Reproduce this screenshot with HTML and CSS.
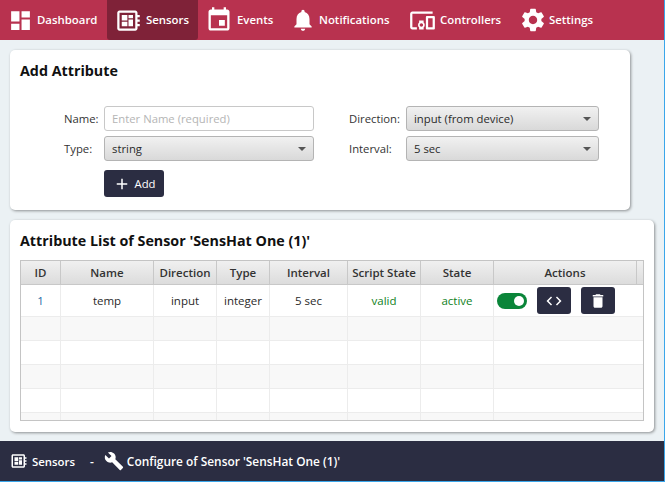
FILE: index.html
```html
<!DOCTYPE html>
<html lang="en">
<head>
<meta charset="utf-8">
<title>Configure Sensor</title>
<link rel="stylesheet" href="styles.css">
</head>
<body>
<div class="page">
  <nav class="nav">
    <a class="nav-item item-dash"><svg class="ico s25" viewBox="0 0 24 24"><path d="M3 13h8V3H3v10zm0 8h8v-6H3v6zm10 0h8V11h-8v10zm0-18v6h8V3h-8z"/></svg><span class="nav-text">Dashboard</span></a>
    <a class="nav-item item-sensors active"><svg class="ico s27" viewBox="0 0 24 24"><path d="M22 9V7h-2V5c0-1.1-.9-2-2-2H4c-1.1 0-2 .9-2 2v14c0 1.1.9 2 2 2h14c1.1 0 2-.9 2-2v-2h2v-2h-2v-2h2v-2h-2V9h2zm-4 10H4V5h14v14zM6 13h5v4H6zm6-6h4v3h-4zM6 7h5v5H6zm6 4h4v6h-4z"/></svg><span class="nav-text">Sensors</span></a>
    <a class="nav-item item-events"><svg class="ico s28" viewBox="0 0 24 24"><path d="M17 12h-5v5h5v-5zM16 1v2H8V1H6v2H5c-1.11 0-1.99.9-1.99 2L3 19c0 1.1.89 2 2 2h14c1.1 0 2-.9 2-2V5c0-1.1-.9-2-2-2h-1V1h-2zm3 18H5V8h14v11z"/></svg><span class="nav-text">Events</span></a>
    <a class="nav-item item-notif"><svg class="ico s26" viewBox="0 0 24 24"><path d="M12 22c1.1 0 2-.9 2-2h-4c0 1.1.89 2 2 2zm6-6v-5c0-3.07-1.64-5.64-4.5-6.32V4c0-.83-.67-1.5-1.5-1.5s-1.5.67-1.5 1.5v.68C7.63 5.36 6 7.92 6 11v5l-2 2v1h16v-1l-2-2z"/></svg><span class="nav-text">Notifications</span></a>
    <a class="nav-item item-ctrl"><svg class="ico s27" viewBox="0 0 24 24"><path d="M3 6h18V4H3c-1.1 0-2 .9-2 2v12c0 1.1.9 2 2 2h4v-2H3V6zm10 6H9v1.78c-.61.55-1 1.33-1 2.22s.39 1.67 1 2.22V20h4v-1.78c.61-.55 1-1.34 1-2.22s-.39-1.67-1-2.22V12zm-2 5.5c-.83 0-1.5-.67-1.5-1.5s.67-1.5 1.5-1.5 1.5.67 1.5 1.5-.67 1.5-1.5 1.5zM22 8h-6c-.5 0-1 .5-1 1v10c0 .5.5 1 1 1h6c.5 0 1-.5 1-1V9c0-.5-.5-1-1-1zm-1 10h-4v-8h4v8z"/></svg><span class="nav-text">Controllers</span></a>
    <a class="nav-item item-set"><svg class="ico s28" viewBox="0 0 24 24"><path d="M19.14 12.94c.04-.3.06-.61.06-.94 0-.32-.02-.64-.07-.94l2.03-1.58c.18-.14.23-.41.12-.61l-1.92-3.32c-.12-.22-.37-.29-.59-.22l-2.39.96c-.5-.38-1.03-.7-1.62-.94l-.36-2.54c-.04-.24-.24-.41-.48-.41h-3.84c-.24 0-.43.17-.47.41l-.36 2.54c-.59.24-1.13.57-1.62.94l-2.39-.96c-.22-.08-.47 0-.59.22L2.74 8.87c-.12.21-.08.47.12.61l2.03 1.58c-.05.3-.09.63-.09.94s.02.64.07.94l-2.03 1.58c-.18.14-.23.41-.12.61l1.92 3.32c.12.22.37.29.59.22l2.39-.96c.5.38 1.03.7 1.62.94l.36 2.54c.05.24.24.41.48.41h3.84c.24 0 .44-.17.47-.41l.36-2.54c.59-.24 1.13-.56 1.62-.94l2.39.96c.22.08.47 0 .59-.22l1.92-3.32c.12-.22.07-.47-.12-.61l-2.01-1.58zM12 15.6c-1.98 0-3.6-1.62-3.6-3.6s1.62-3.6 3.6-3.6 3.6 1.62 3.6 3.6-1.62 3.6-3.6 3.6z"/></svg><span class="nav-text">Settings</span></a>
  </nav>

  <main class="main">
    <section class="card card-form">
      <h2 class="card-title">Add Attribute</h2>
      <form class="form">
        <label class="lbl">Name:</label>
        <input class="field" type="text" placeholder="Enter Name (required)">
        <label class="lbl lbl-right">Direction:</label>
        <div class="field select"><span>input (from device)</span><i class="caret"></i></div>
        <label class="lbl">Type:</label>
        <div class="field select"><span>string</span><i class="caret"></i></div>
        <label class="lbl lbl-right">Interval:</label>
        <div class="field select"><span>5 sec</span><i class="caret"></i></div>
        <button class="btn btn-add" type="button"><svg class="ico s18" viewBox="0 0 24 24"><path d="M19 13h-6v6h-2v-6H5v-2h6V5h2v6h6v2z"/></svg><span>Add</span></button>
      </form>
    </section>

    <section class="card card-list">
      <h2 class="card-title">Attribute List of Sensor 'SensHat One (1)'</h2>
      <div class="grid-wrap">
        <table class="grid">
          <colgroup>
            <col class="c-id"><col class="c-name"><col class="c-dir"><col class="c-type"><col class="c-int"><col class="c-script"><col class="c-state"><col class="c-act"><col class="c-gut">
          </colgroup>
          <thead>
            <tr><th>ID</th><th>Name</th><th>Direction</th><th>Type</th><th>Interval</th><th>Script State</th><th>State</th><th>Actions</th><th></th></tr>
          </thead>
          <tbody>
            <tr class="row-main">
              <td class="id">1</td><td>temp</td><td>input</td><td>integer</td><td>5 sec</td><td class="ok">valid</td><td class="ok">active</td>
              <td colspan="2" class="actions">
                <div class="actions-in">
                  <span class="toggle"><i class="knob"></i></span>
                  <button class="btn btn-act" type="button"><svg class="ico s18" viewBox="0 0 24 24"><path d="M9.4 16.6L4.8 12l4.6-4.6L8 6l-6 6 6 6 1.4-1.4zm5.2 0l4.6-4.6-4.6-4.6L16 6l6 6-6 6-1.4-1.4z"/></svg></button>
                  <button class="btn btn-act" type="button"><svg class="ico s18" viewBox="0 0 24 24"><path d="M6 19c0 1.1.9 2 2 2h8c1.1 0 2-.9 2-2V7H6v12zM19 4h-3.5l-1-1h-5l-1 1H5v2h14V4z"/></svg></button>
                </div>
              </td>
            </tr>
            <tr class="alt"><td></td><td></td><td></td><td></td><td></td><td></td><td></td><td colspan="2"></td></tr>
            <tr><td></td><td></td><td></td><td></td><td></td><td></td><td></td><td colspan="2"></td></tr>
            <tr class="alt"><td></td><td></td><td></td><td></td><td></td><td></td><td></td><td colspan="2"></td></tr>
            <tr><td></td><td></td><td></td><td></td><td></td><td></td><td></td><td colspan="2"></td></tr>
            <tr class="alt"><td></td><td></td><td></td><td></td><td></td><td></td><td></td><td colspan="2"></td></tr>
          </tbody>
        </table>
      </div>
    </section>
  </main>

  <footer class="foot">
    <svg class="ico s18" viewBox="0 0 24 24"><path d="M22 9V7h-2V5c0-1.1-.9-2-2-2H4c-1.1 0-2 .9-2 2v14c0 1.1.9 2 2 2h14c1.1 0 2-.9 2-2v-2h2v-2h-2v-2h2v-2h-2V9h2zm-4 10H4V5h14v14zM6 13h5v4H6zm6-6h4v3h-4zM6 7h5v5H6zm6 4h4v6h-4z"/></svg>
    <span class="crumb crumb-first">Sensors</span>
    <span class="sep">-</span>
    <svg class="ico s20" viewBox="0 0 24 24"><path d="M22.7 19l-9.1-9.1c.9-2.3.4-5-1.5-6.9-2-2-5-2.4-7.4-1.3L9 6 6 9 1.6 4.7C.4 7.1.9 10.1 2.9 12.1c1.9 1.9 4.6 2.4 6.9 1.5l9.1 9.1c.4.4 1 .4 1.4 0l2.3-2.3c.5-.4.5-1.1.1-1.4z"/></svg>
    <span class="crumb">Configure of Sensor 'SensHat One (1)'</span>
  </footer>
</div>
</body>
</html>
```
FILE: styles.css
```css
* { box-sizing: border-box; }
html, body { margin: 0; padding: 0; }
body {
  width: 665px;
  height: 482px;
  overflow: hidden;
  font-family: "Open Sans", "Noto Sans", sans-serif;
  font-size: 11.3px;
  color: #2a2a2a;
}
.page {
  width: 665px;
  height: 482px;
  display: flex;
  flex-direction: column;
  background: #ebf1f4;
  border-right: 1px solid #3aa6ea;
  border-bottom: 1px solid #3aa6ea;
}
.ico { fill: currentColor; display: block; flex: none; }
.s18 { width: 18px; height: 18px; }
.s20 { width: 20px; height: 20px; }
.s25 { width: 25px; height: 25px; }
.s26 { width: 26px; height: 26px; }
.s27 { width: 27px; height: 27px; }
.s28 { width: 28px; height: 28px; }

.nav {
  height: 40px;
  flex: none;
  display: flex;
  align-items: stretch;
  background: #b8324f;
  color: #fff;
  font-size: 11.4px;
  font-weight: 600;
  padding-left: 8px;
}
.nav-item {
  display: flex;
  align-items: center;
  border-radius: 0 0 3px 3px;
}
.nav-text { margin-bottom: 2px; }
.item-dash { gap: 4px; width: 99px; }
.item-sensors { gap: 4px; width: 91px; padding-left: 8px; }
.item-events { gap: 4px; width: 90px; padding-left: 7px; }
.item-notif { gap: 3px; width: 112px; padding-left: 2px; }
.item-ctrl { gap: 4px; width: 112px; padding-left: 9px; }
.item-set { gap: 2px; padding-left: 7px; }
.active { background: #7f2238; }

.main {
  flex: 1;
  display: flex;
  flex-direction: column;
  align-items: flex-start;
  gap: 10px;
  padding: 10px 10px 0;
}
.card {
  background: #fff;
  border-radius: 5px;
  box-shadow: 1px 1px 3px rgba(0, 0, 0, .4);
  padding: 10px;
}
.card-form { width: 620px; height: 160px; }
.card-list { width: 644px; height: 212px; }
.card-title {
  margin: 0;
  font-size: 14.3px;
  line-height: 22px;
  font-weight: 700;
  color: #111;
}

.form {
  display: grid;
  grid-template-columns: 84px 210px 92px 193px;
  grid-template-rows: 25px 25px 31px;
  row-gap: 5px;
  margin-top: 24px;
  align-items: center;
}
.lbl { padding-left: 44px; color: #333; }
.lbl-right { padding-left: 35px; }
.field {
  height: 100%;
  border: 1px solid #c8c8c8;
  border-radius: 3px;
  padding: 0 7px;
  font: inherit;
  color: #2a2a2a;
  background: #fff;
  outline: none;
  width: 100%;
}
.field::placeholder { color: #b5b5b5; opacity: 1; }
.select {
  display: flex;
  align-items: center;
  justify-content: space-between;
  background: linear-gradient(#f1f1f1, #d9d9d9);
  border-color: #b4b4b4;
}
.caret {
  width: 0;
  height: 0;
  border-left: 4px solid transparent;
  border-right: 4px solid transparent;
  border-top: 4px solid #555;
}
.btn {
  border: 0;
  border-radius: 3px;
  background: #2b2d42;
  color: #fff;
  font: inherit;
  display: flex;
  align-items: center;
  justify-content: center;
  padding: 0;
}
.btn-add {
  grid-column: 2;
  align-self: end;
  width: 60px;
  height: 27px;
  gap: 4px;
}

.grid-wrap {
  margin-top: 8px;
  height: 161px;
  overflow: hidden;
  border: 1px solid #c4c4c4;
}
.grid {
  width: 622px;
  table-layout: fixed;
  border-collapse: separate;
  border-spacing: 0;
  font-size: 11.5px;
}
.c-id { width: 40px; }
.c-name { width: 93px; }
.c-dir { width: 63px; }
.c-type { width: 53px; }
.c-int { width: 78px; }
.c-script { width: 73px; }
.c-state { width: 73px; }
.c-act { width: 143px; }
.c-gut { width: 6px; }
.grid th {
  height: 24px;
  padding: 0;
  font-weight: 600;
  color: #333;
  text-align: center;
  background: linear-gradient(#f0f0f0, #dcdcdc);
  border-right: 1px solid #c8c8c8;
  border-bottom: 1px solid #c8c8c8;
}
.grid td {
  height: 24px;
  padding: 0;
  text-align: center;
  border-right: 1px solid #ececec;
  border-bottom: 1px solid #ececec;
}
.grid tr td:last-child, .grid tr th:last-child { border-right: 0; }
.grid .row-main td { height: 32px; }
.alt td { background: #f8f8f8; }
.grid .id { color: #1f6aa5; }
.grid .ok { color: #0f7f1c; }
.actions-in {
  display: flex;
  align-items: center;
  padding-left: 3px;
}
.toggle {
  width: 30px;
  height: 16px;
  border-radius: 8px;
  background: #0a8539;
  display: flex;
  align-items: center;
  justify-content: flex-end;
  padding-right: 3px;
}
.knob { width: 10px; height: 10px; border-radius: 50%; background: #fff; }
.btn-act { width: 34px; height: 27px; margin-left: 10px; }

.foot {
  height: 40px;
  flex: none;
  display: flex;
  align-items: center;
  background: #2b2d42;
  color: #fff;
  font-size: 11.9px;
  font-weight: 600;
  padding-left: 10px;
}
.crumb { margin-left: 3px; }
.crumb-first { margin-left: 4px; font-size: 11.4px; }
.sep { margin: 0 10px 0 15px; }
```
